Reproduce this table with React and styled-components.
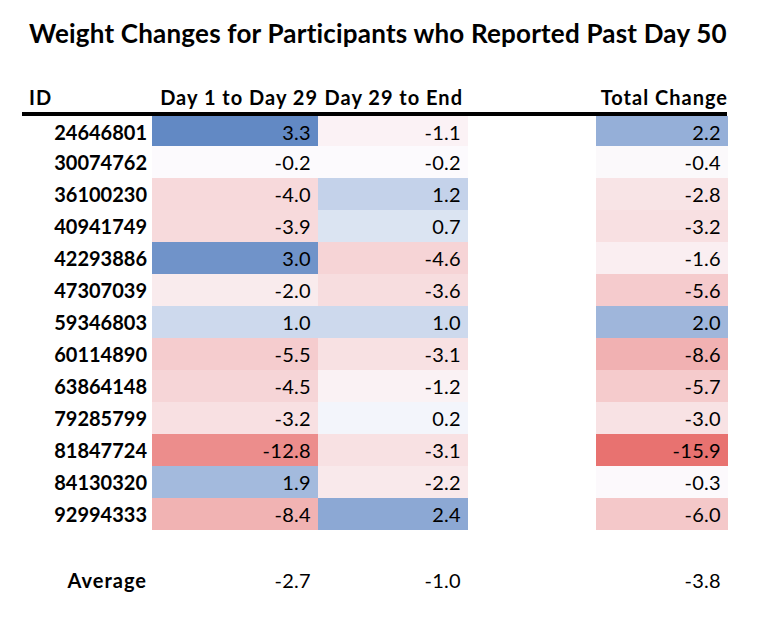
import React from "react";
import styled, { createGlobalStyle } from "styled-components";

const GlobalStyle = createGlobalStyle`
  body {
    margin: 0;
    background: #ffffff;
    font-family: Lato, "Open Sans", sans-serif;
    color: #000000;
  }
`;

const Page = styled.div`
  width: 766px;
  height: 620px;
  padding: 18px 0 0 22px;
  box-sizing: border-box;
`;

const Title = styled.h1`
  margin: 0 0 30px 7px;
  font-size: 26px;
  line-height: 30px;
  letter-spacing: 0.2px;
  font-weight: 700;
  white-space: nowrap;
`;

const Row = styled.div`
  display: grid;
  grid-template-columns: 130px 166px 150px 128px 132px;
  height: ${(props) => props.$height || 32}px;
  width: 706px;
`;

const HeaderRow = styled(Row)`
  border-bottom: 4px solid #000000;
  width: 705px;
  align-items: end;
`;

const HeadCell = styled.div`
  font-weight: 700;
  font-size: 20px;
  line-height: 30px;
  letter-spacing: 1px;
  white-space: nowrap;
  text-align: ${(props) => (props.$left ? "left" : "right")};
  padding: ${(props) => (props.$left ? "0 0 0 7px" : `0 ${props.$pad || 0}px 0 0`)};
`;

const IdCell = styled.div`
  font-weight: 700;
  font-size: 20px;
  line-height: 32px;
  letter-spacing: ${(props) => (props.$wide ? "1px" : "0")};
  text-align: right;
  padding-right: 5px;
  align-self: end;
  white-space: nowrap;
`;

const ValueCell = styled.div`
  font-size: 20px;
  line-height: 32px;
  letter-spacing: 0.3px;
  text-align: right;
  padding-right: 7px;
  background: ${(props) => props.$bg || "transparent"};
  display: flex;
  align-items: flex-end;
  justify-content: flex-end;
`;

const Gap = styled.div``;

const rows = [
  ["24646801", 3.3, -1.1, 2.2],
  ["30074762", -0.2, -0.2, -0.4],
  ["36100230", -4.0, 1.2, -2.8],
  ["40941749", -3.9, 0.7, -3.2],
  ["42293886", 3.0, -4.6, -1.6],
  ["47307039", -2.0, -3.6, -5.6],
  ["59346803", 1.0, 1.0, 2.0],
  ["60114890", -5.5, -3.1, -8.6],
  ["63864148", -4.5, -1.2, -5.7],
  ["79285799", -3.2, 0.2, -3.0],
  ["81847724", -12.8, -3.1, -15.9],
  ["84130320", 1.9, -2.2, -0.3],
  ["92994333", -8.4, 2.4, -6.0],
];

// blue - white - red colour scale, like the spreadsheet's conditional format
const MIN = -15.9;
const MAX = 3.3;
const white = [252, 252, 255];
const red = [232, 114, 112];
const blue = [98, 137, 196];

const scaleColor = (v) => {
  const end = v < 0 ? red : blue;
  const t = v < 0 ? v / MIN : v / MAX;
  const c = white.map((w, i) => Math.round(w + (end[i] - w) * t));
  return `rgb(${c[0]}, ${c[1]}, ${c[2]})`;
};

const fmt = (v) => v.toFixed(1);

const App = () => {
  return (
    <Page>
      <GlobalStyle />
      <Title>Weight Changes for Participants who Reported Past Day 50</Title>
      <HeaderRow $height={34}>
        <HeadCell $left>ID</HeadCell>
        <HeadCell>Day 1 to Day 29</HeadCell>
        <HeadCell $pad={5}>Day 29 to End</HeadCell>
        <Gap />
        <HeadCell>Total Change</HeadCell>
      </HeaderRow>
      {rows.map(([id, a, b, total], i) => (
        <Row key={id} $height={i === 0 ? 30 : 32}>
          <IdCell>{id}</IdCell>
          <ValueCell $bg={scaleColor(a)}>{fmt(a)}</ValueCell>
          <ValueCell $bg={scaleColor(b)}>{fmt(b)}</ValueCell>
          <Gap />
          <ValueCell $bg={scaleColor(total)}>{fmt(total)}</ValueCell>
        </Row>
      ))}
      <Row $height={34} />
      <Row>
        <IdCell $wide>Average</IdCell>
        <ValueCell>-2.7</ValueCell>
        <ValueCell>-1.0</ValueCell>
        <Gap />
        <ValueCell>-3.8</ValueCell>
      </Row>
    </Page>
  );
};

export default App;
